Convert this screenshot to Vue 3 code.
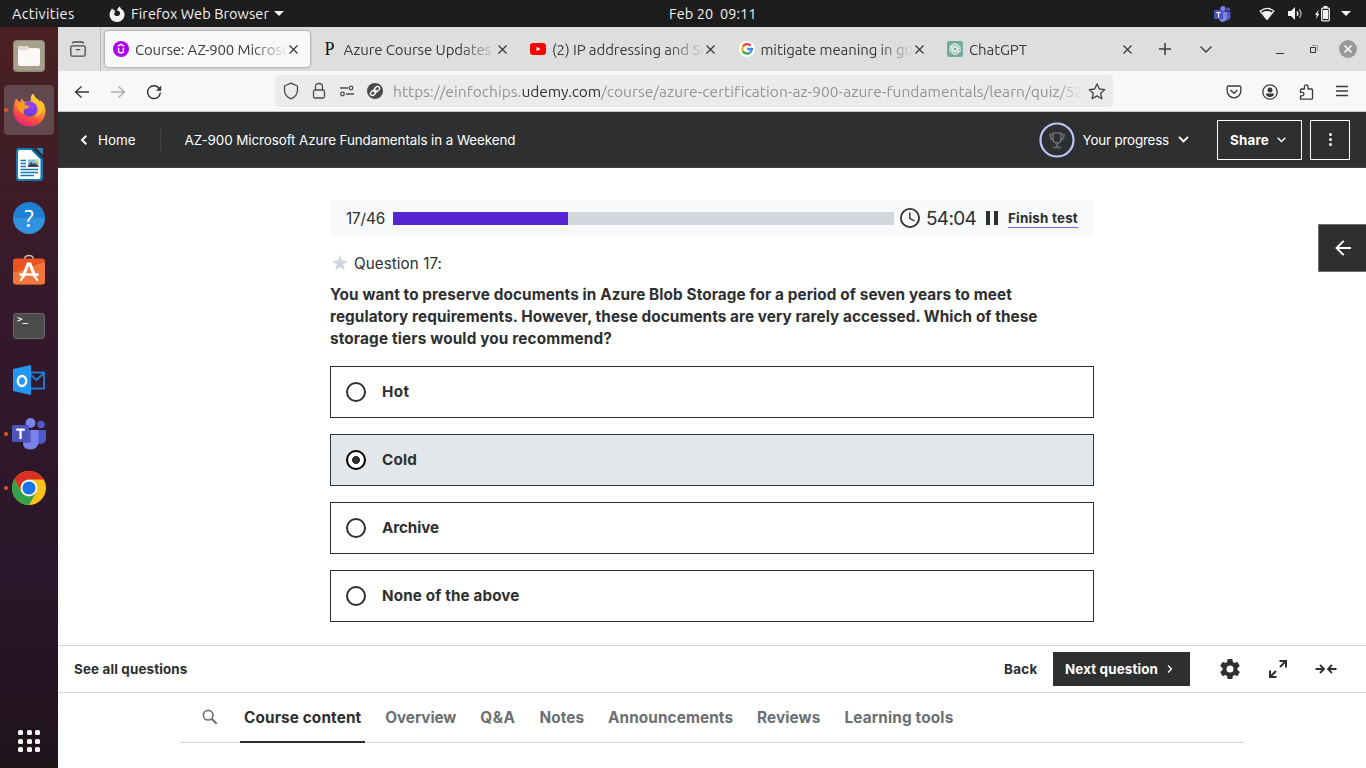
<script setup>
const vFit = {
  mounted(el, { value }) {
    const natural = el.getBoundingClientRect().width
    const count = el.textContent.length
    el.style.letterSpacing = ((value - natural) / count).toFixed(4) + 'px'
  },
}

const tabs = [
  { icon: 'udemy', title: 'Course: AZ-900', rest: ' Microsoft', width: 99, active: true },
  { icon: 'p', title: 'Azure Course Updates', rest: '', width: 147.5 },
  { icon: 'youtube', title: '(2) IP addressing and', rest: ' Subnet', width: 137 },
  { icon: 'google', title: 'mitigate meaning in', rest: ' gujarati', width: 132 },
  { icon: 'gpt', title: 'ChatGPT', rest: '', width: 58 },
]

const questionLines = [
  { text: 'You want to preserve documents in Azure Blob Storage for a period of seven years to meet', width: 682 },
  { text: 'regulatory requirements. However, these documents are very rarely accessed. Which of these', width: 707.5 },
  { text: 'storage tiers would you recommend?', width: 282 },
]

const options = [
  { text: 'Hot', width: 27.5 },
  { text: 'Cold', width: 35 },
  { text: 'Archive', width: 57 },
  { text: 'None of the above', width: 137.5 },
]
const selected = 'Cold'

const sections = [
  { text: 'Course content', width: 117.3, active: true },
  { text: 'Overview', width: 71 },
  { text: 'Q&A', width: 35.3 },
  { text: 'Notes', width: 44.5 },
  { text: 'Announcements', width: 125 },
  { text: 'Reviews', width: 63.3 },
  { text: 'Learning tools', width: 109 },
]

const progress = { done: 175, total: 501 }
</script>

<template>
  <div class="desktop">
    <header class="topbar">
      <span class="activities"><span v-fit="62.5">Activities</span></span>
      <svg class="fx-mini" width="16" height="16" viewBox="0 0 16 16">
        <path fill="#f2f2f2" d="M3 2.2 4.2 3.8 6.2 4.2 5.2 5.6 6.6 6.4 5 7.4C5.4 9.8 8 10.8 9.8 9.6 11.6 8.4 11.4 5.8 9.8 5L8 4.6C8.4 2.6 9.4 1 11 .4c.1 1.4 1 2 2.200 3.200C15.600 6 16.200 9 14.800 11.800 13.400 14.600 10.800 16 8 16 3.800 16 .6 12.900.6 8.800.6 7 1.200 5.600 1.900 4.600Z" />
      </svg>
      <span class="app-name"><span v-fit="138">Firefox Web Browser</span></span>
      <svg width="10" height="5" viewBox="0 0 10 5"><path fill="#f2f2f2" d="M0 0h10L5 5z" /></svg>
      <span class="clock"><span v-fit="87.5">Feb 20&nbsp; 09:11</span></span>
      <span class="tray">
        <svg width="17" height="16" viewBox="0 0 17 16">
          <circle cx="9" cy="2.600" r="2.600" fill="#7b83eb" /><circle cx="14.200" cy="3.400" r="1.900" fill="#5059c9" />
          <path fill="#5059c9" d="M10 6h6.500v5a3.500 3.500 0 0 1-5 3z" /><path fill="#7b83eb" d="M5 5.500h8v6a4.200 4.200 0 0 1-8 2z" />
          <rect x="0" y="4" width="9" height="9" rx=".8" fill="#4b53bc" /><path fill="#fff" d="M2.300 5.900h4.400v1.200H5.100v4.300H3.900V7.100H2.300z" />
        </svg>
        <svg class="wifi" width="16" height="13" viewBox="0 0 16 13">
          <path fill="#f2f2f2" d="M3 5.500Q8 2.600 13 5.500L8 12.500z" /><path fill="none" stroke="#f2f2f2" stroke-width="1.300" d="M1.200 4.200Q8-1.600 14.800 4.200M.8 3.600 8 12.500 15.200 3.600" />
        </svg>
        <svg class="sound" width="15" height="13" viewBox="0 0 15 13">
          <path fill="#f2f2f2" d="M0 4h3l4-4v13L3 9H0z" /><path fill="none" stroke="#f2f2f2" stroke-width="1.400" d="M9 4.300q1.600 2.200 0 4.400" /><path fill="none" stroke="#a8a8a8" stroke-width="1.400" d="M11.300 2.300q3.400 4.200 0 8.400" />
        </svg>
        <svg class="battery" width="15" height="16" viewBox="0 0 15 16">
          <path fill="#f2f2f2" d="M3.700 3.500 0 9h1.800L1 13l3.300-5.300H2.600zM8.500 0h4v2h-4zM8 4h5v9H8z" /><rect x="6.700" y="2.200" width="7.600" height="12.600" rx="1" fill="none" stroke="#f2f2f2" stroke-width="1.300" />
        </svg>
        <svg width="10" height="5" viewBox="0 0 10 5"><path fill="#f2f2f2" d="M0 0h10L5 5z" /></svg>
      </span>
    </header>

    <div class="below">
      <nav class="dock">
        <div class="app">
          <svg width="32" height="32" viewBox="0 0 32 32">
            <rect width="32" height="32" rx="4" fill="#8f8875" /><rect x="1" y="1" width="30" height="29.500" rx="3.500" fill="#a8a08d" />
            <path fill="#e2dad2" d="M5 9V7.500Q5 6 6.500 6H14q1 0 1.500 1L17 8.500h8v4H5z" /><path fill="#faf9f8" d="M5.500 10H14l2-1.700h9.500q1.500 0 1.500 1.500V24q0 2-2 2H7q-2 0-2-2V11z" />
          </svg>
        </div>
        <div class="app current running">
          <svg width="33" height="34" viewBox="0 0 33 34">
            <defs>
              <linearGradient id="flame" x1=".8" y1="0" x2=".3" y2="1"><stop offset="0" stop-color="#fff044" /><stop offset=".35" stop-color="#ffb02c" /><stop offset=".65" stop-color="#ff5a35" /><stop offset="1" stop-color="#e8207f" /></linearGradient>
              <radialGradient id="globe" cx=".6" cy=".25" r=".8"><stop offset="0" stop-color="#a040ff" /><stop offset="1" stop-color="#5b3fd0" /></radialGradient>
            </defs>
            <path fill="url(#flame)" d="M3.200 5.500 5.700 8.700 8 8.400 8.300 5.500 11.200 8.800 16.500 8.800 18 7C17.300 4 18.500 1.400 20.500.5 21 4 24 5.300 26.300 8.500L27.500 7.500C31 10 32.500 13.500 32.500 18 32.500 27 25.500 33.500 16.500 33.500 7.500 33.500.5 27 .5 18 .5 13 1.500 8.500 3.200 5.500Z" />
            <circle cx="16.700" cy="16" r="7.600" fill="url(#globe)" />
            <path fill="#ff9a21" d="M3.500 12q4-3 8.500-.5l4.200 1.700q-.7 2.600-4.200 2.700-2.600 1.200-.5 4.600-5.500.5-8-8.500z" />
            <path fill="#ffc42f" d="M18 7q6 1 7.600 6.500 1.600 6.500-4 10.500 9-2 7.500-11-1-5-5.500-7.500z" />
          </svg>
        </div>
        <div class="app">
          <svg width="27" height="33" viewBox="0 0 27 33">
            <path fill="#1479ad" d="M3 0h14l10 10v20q0 3-3 3H3q-3 0-3-3V3q0-3 3-3z" /><path fill="#2387bb" d="M20 0h7v7z" /><path fill="#0d4e74" d="m17 0 10 10-1 1L16 1z" />
            <path fill="#fff" d="M3.500 2H15l9.500 9.500V29q0 2-2 2h-19q-1.500 0-1.500-2V3.500Q2 2 3.500 2z" />
            <path stroke="#1479ad" stroke-width="1.400" d="M4.500 12.500H10M4.500 15.500H10M4.500 18.500H10M4.500 21.500H22M4.500 24.500H22M4.500 27.500H18" /><rect x="12" y="11.500" width="10.500" height="7.500" fill="#82bfe2" /><path fill="#41474d" d="m12 18 3-4 2 2 2-1 3.500 3v1H12z" /><circle cx="20.500" cy="13" r="1.300" fill="#ffd431" />
          </svg>
        </div>
        <div class="app help"><span>?</span></div>
        <div class="app">
          <svg class="store" width="32" height="32" viewBox="0 0 32 32">
            <path fill="none" stroke="#c9bda5" stroke-width="1.500" d="M11.500 6q0-4.500 4.500-4.500T20.500 6" /><rect y="4.500" width="32" height="26" rx="3" fill="#e95420" /><path fill="#f4884f" d="M0 19 32 8v19.500q0 3-3 3H3q-3 0-3-3z" opacity=".65" />
            <path fill="none" stroke="#fff" stroke-width="3.200" d="M9.500 24 15 10h2l5.500 14" /><path stroke="#fff" stroke-width="2.500" stroke-linecap="round" d="M7.500 20.500h17" /><path stroke="#fff" stroke-width="2.200" stroke-linecap="round" d="m8.800 24.500-1 1.500M23.300 24.500l1 1.500" />
          </svg>
        </div>
        <div class="app">
          <div class="terminal"><span>&gt;_</span></div>
        </div>
        <div class="app">
          <svg width="32" height="31" viewBox="0 0 32 31">
            <rect x="15.500" y="7.500" width="15.500" height="16" fill="none" stroke="#1b80db" stroke-width="1.800" /><path fill="none" stroke="#1b80db" stroke-width="1.800" d="m17 9 6.500 6L31 8" /><path fill="#2196f3" d="M0 4 18 0v30L0 26z" /><ellipse cx="9" cy="16" rx="4.200" ry="5" fill="none" stroke="#fff" stroke-width="2.400" />
          </svg>
        </div>
        <div class="app running">
          <svg width="34" height="32" viewBox="0 0 34 32">
            <circle cx="29" cy="6.500" r="3.800" fill="#5059c9" /><circle cx="18.500" cy="5" r="5" fill="#7b83eb" /><path fill="#5059c9" d="M24 12h10v8q0 6-6 6h-4z" /><path fill="#7b83eb" d="M11 12h15.500v11q0 8.500-8 8.500T11 24z" /><path fill="#5961c6" d="M11 12h8v11q0 2-2 2h-6z" />
            <rect y="7" width="17" height="17" rx="1.500" fill="#4b53bc" /><path fill="#fff" d="M4.300 10.500h8.500v2.200H9.700V21H7.400v-8.300H4.300z" />
          </svg>
        </div>
        <div class="app running">
          <svg width="34" height="34" viewBox="0 0 34 34">
            <circle cx="17" cy="17" r="17" fill="#fbc116" /><path fill="#d93025" d="M2.280 8.500A17 17 0 0 1 31.720 8.500H17a8.500 8.500 0 0 0-7.360 12.750z" /><path fill="#34a24c" d="M2.280 8.500A17 17 0 0 0 17 34l7.360-12.750A8.500 8.500 0 0 1 9.640 21.250z" /><circle cx="17" cy="17" r="8.300" fill="#fff" /><circle cx="17" cy="17" r="6.600" fill="#1a73e8" />
          </svg>
        </div>
        <div class="all-apps"><i v-for="n in 9" :key="n"></i></div>
      </nav>

      <main class="browser">
        <div class="tabstrip">
          <div class="view">
            <svg width="16" height="16" viewBox="0 0 16 16" fill="none" stroke="#4a4a4a" stroke-width="1.300" stroke-linecap="round"><path d="M2.500 2q.5-1 1.700-1h7.600q1.200 0 1.700 1" /><rect x=".8" y="4.800" width="14.400" height="10.400" rx="1.600" /><path d="M6.300 8.700h3.400" /></svg>
          </div>
          <div v-for="tab in tabs" :key="tab.title" class="tab" :class="{ active: tab.active }">
            <svg class="favicon" width="16" height="16" viewBox="0 0 16 16">
              <template v-if="tab.icon === 'udemy'">
                <circle cx="8" cy="8" r="8" fill="#b000f0" /><path fill="none" stroke="#fff" stroke-width="1.500" d="M4.800 5.200 8 3.400l3.200 1.800M5.600 6.800v3q0 2.300 2.400 2.300t2.400-2.300v-3" />
              </template>
              <text v-else-if="tab.icon === 'p'" class="letter" x="2.500" y="14">P</text>
              <template v-else-if="tab.icon === 'youtube'">
                <rect y="2" width="16" height="12" rx="3" fill="#f00" /><path fill="#fff" d="m6.500 5.700 4 2.300-4 2.300z" />
              </template>
              <template v-else-if="tab.icon === 'google'">
                <circle cx="8" cy="8" r="8" fill="#fff" /><g fill="none" stroke-width="2.300"><path stroke="#ea4335" d="M4 5.500a4.800 4.800 0 0 1 7.600-.8" /><path stroke="#fbbc05" d="M4.100 5.300a5 5 0 0 0 0 5.400" /><path stroke="#34a853" d="M4 10.500a4.800 4.800 0 0 0 7.300.9" /><path stroke="#4285f4" d="M11.200 11.400A4.800 4.800 0 0 0 12.900 8H8.200" /></g>
              </template>
              <template v-else>
                <rect width="16" height="16" rx="2" fill="#74aa9c" /><g fill="none" stroke="#fff" stroke-width=".8"><path v-for="a in 6" :key="a" :transform="`rotate(${a * 60} 8 8)`" d="M6 5.200 8.500 3.700q3-1.200 4.300 1.600.5 1.500-.3 2.700M8 5.700 10 6.800v4" /></g>
              </template>
            </svg>
            <span class="title"><span v-fit="tab.width">{{ tab.title }}</span>{{ tab.rest }}</span>
            <svg class="close" width="9" height="9" viewBox="0 0 9 9"><path stroke="#333" stroke-width="1.100" d="m.5.500 8 8m0-8-8 8" /></svg>
          </div>
          <div class="window-tools">
            <svg width="12" height="12" viewBox="0 0 12 12"><path stroke="#3a3a3a" stroke-width="1.500" d="M6 0v12M0 6h12" /></svg>
            <svg class="list" width="12" height="7" viewBox="0 0 12 7"><path fill="none" stroke="#3a3a3a" stroke-width="1.400" d="m.5.500 5.500 5.500L11.500.5" /></svg>
            <svg class="min" width="8" height="6" viewBox="0 0 8 6"><path fill="#333" d="M0 5h8v1H0z" /></svg>
            <svg class="restore" width="8" height="8" viewBox="0 0 8 8" fill="none"><path stroke="#999" d="M2 .5h5.500V6" /><path stroke="#333" stroke-width="1" d="M.5 2.500h5v5h-5z" /></svg>
            <svg class="quit" width="18" height="18" viewBox="0 0 18 18"><circle cx="9" cy="9" r="9" fill="#999" /><path stroke="#fff" stroke-width="1.500" d="m5.500 5.500 7 7m0-7-7 7" /></svg>
          </div>
        </div>

        <div class="toolbar">
          <div class="nav-buttons">
            <svg width="16" height="16" viewBox="0 0 16 16" fill="none" stroke="#333" stroke-width="1.300"><path d="M15 8H1.500m6-5.500L1.500 8l6 5.500" /></svg>
            <svg width="16" height="16" viewBox="0 0 16 16" fill="none" stroke="#aaa" stroke-width="1.300"><path d="M1 8h13.500m-6-5.500 6 5.500-6 5.500" /></svg>
            <svg width="16" height="16" viewBox="0 0 16 16"><path fill="none" stroke="#333" stroke-width="1.400" d="M13.600 5A6.400 6.400 0 1 0 14.400 8.500" /><path fill="#333" d="M15.200 1.500v5.200H10z" /></svg>
          </div>
          <div class="urlbar">
            <svg width="16" height="18" viewBox="0 0 16 18"><path fill="none" stroke="#4b4b4b" stroke-width="1.300" stroke-linejoin="round" d="M8 1.200 14.500 4v4q0 6-6.500 8.800Q1.500 14 1.500 8V4z" /></svg>
            <svg width="16" height="18" viewBox="0 0 16 18" fill="none" stroke="#4b4b4b" stroke-width="1.300"><rect x="2.500" y="8" width="11" height="8" rx="1.500" /><path d="M4.500 8V4.500q0-3 3.500-3t3.500 3V8" /></svg>
            <svg width="16" height="16" viewBox="0 0 16 16" fill="none" stroke="#4b4b4b" stroke-width="1.300"><path d="M1 5h8M7 11h8" /><circle cx="12" cy="5" r="1.800" /><circle cx="3.500" cy="11" r="1.800" /></svg>
            <svg width="16" height="16" viewBox="0 0 16 16"><circle cx="8" cy="8" r="8" fill="#4b4b4b" /><g fill="none" stroke="#fff" stroke-width="1.300" transform="rotate(-45 8 8)"><rect x="2.400" y="6" width="5.600" height="4" rx="2" /><rect x="8" y="6" width="5.600" height="4" rx="2" /><path d="M6 8h4" /></g></svg>
            <span class="address"><span v-fit="128.5">https://einfochips.</span><b v-fit="79.5">udemy.com</b><span v-fit="464">/course/azure-certification-az-900-azure-fundamentals/learn/quiz/</span>52</span>
            <svg width="18" height="17" viewBox="0 0 18 17"><path fill="none" stroke="#444" stroke-width="1.300" stroke-linejoin="round" d="m9 1 2.300 5 5.500.6-4.100 3.700 1.200 5.400L9 12.900l-4.900 2.800 1.200-5.400-4.100-3.700 5.500-.6z" /></svg>
          </div>
          <div class="extras">
            <svg width="16" height="16" viewBox="0 0 16 16" fill="none" stroke="#3a3a3a" stroke-width="1.300"><path d="M2.500 2h11q1.300 0 1.300 1.300v3.700a6.800 6.800 0 0 1-13.600 0V3.300Q1.200 2 2.500 2z" /><path d="m4.500 6 3.500 3.300L11.500 6" /></svg>
            <svg width="16" height="16" viewBox="0 0 16 16"><circle cx="8" cy="8" r="7.200" fill="none" stroke="#3a3a3a" stroke-width="1.300" /><circle cx="8" cy="6" r="2.500" fill="#3a3a3a" /><path fill="#3a3a3a" d="M3.800 9.500h8.400q-.5 3.500-4.200 3.500t-4.200-3.500z" /></svg>
            <svg width="16" height="16" viewBox="0 0 16 16"><path fill="none" stroke="#3a3a3a" stroke-width="1.300" stroke-linejoin="round" d="M2.500 15.200h11q1 0 1-1V6q0-1-1-1H10V3Q10 .8 8.200.8T6.400 3v2H3.500q-1 0-1 1v2.400h1.700q1.800 0 1.800 1.700t-1.800 1.700H2.500z" /></svg>
            <svg class="menu" width="16" height="16" viewBox="0 0 16 16"><path stroke="#3a3a3a" stroke-width="1.300" d="M2 3.500h12M2 8h12M2 12.500h12" /></svg>
          </div>
        </div>

        <div class="page">
          <div class="course-bar">
            <svg width="8" height="10" viewBox="0 0 8 10"><path fill="none" stroke="#fff" stroke-width="1.900" d="M6.300.8 2 5l4.300 4.200" /></svg>
            <span class="home"><span v-fit="37.500">Home</span></span>
            <i class="rule"></i>
            <span class="course-title"><span v-fit="331">AZ-900 Microsoft Azure Fundamentals in a Weekend</span></span>
            <svg class="trophy" width="36" height="36" viewBox="0 0 36 36"><circle cx="18" cy="18" r="16.500" fill="none" stroke="#c0c4fc" stroke-width="2.200" /><g fill="none" stroke="#6a6f73" stroke-width="1.600"><path d="M14 11h8v6q0 4-4 4t-4-4zM14 12.500h-3q0 5.500 4 5.500M22 12.500h3q0 5.500-4 5.500M18 21v4M14 25.500h8" /></g></svg>
            <span class="progress-label"><span v-fit="86.500">Your progress</span></span>
            <svg width="11" height="7" viewBox="0 0 11 7"><path fill="none" stroke="#fff" stroke-width="1.900" d="m1 .8 4.500 4.500L10 .8" /></svg>
            <button class="share"><span v-fit="39">Share</span><svg width="9" height="6" viewBox="0 0 9 6"><path fill="none" stroke="#fff" stroke-width="1.400" d="m.7.700 3.800 3.800L8.300.7" /></svg></button>
            <button class="more"><i></i><i></i><i></i></button>
          </div>

          <button class="sidebar-toggle">
            <svg width="16" height="16" viewBox="0 0 16 16"><path fill="none" stroke="#fff" stroke-width="1.900" d="M16 8H2M8.700.8 1.500 8l7.200 7.200" /></svg>
          </button>

          <section class="quiz">
            <div class="quiz-status">
              <span class="counter"><span v-fit="39">17/46</span></span>
              <div class="track"><div class="fill" :style="{ width: (progress.done / progress.total) * 100 + '%' }"></div></div>
              <svg class="timer" width="20" height="20" viewBox="0 0 20 20" fill="none" stroke="#2d2f31"><circle cx="10" cy="10" r="9.100" stroke-width="1.800" /><path stroke-width="1.400" d="M9.800 4.500v5.800l4.700 2.700" /></svg>
              <span class="time"><span v-fit="50">54:04</span></span>
              <svg class="pause" width="12" height="14" viewBox="0 0 12 14"><path fill="#2d2f31" d="M0 0h4v14H0zM8 0h4v14H8z" /></svg>
              <span class="finish"><span v-fit="70">Finish test</span></span>
            </div>
            <div class="question-number">
              <svg width="16" height="16" viewBox="0 0 16 16"><path fill="#d1d7dc" d="m8 0 2 5.600 6 .2-4.800 3.600 1.800 6L8 12l-5 3.400 1.800-6L0 5.800l6-.2z" /></svg>
              <span v-fit="88">Question 17:</span>
            </div>
            <div class="prompt">
              <div v-for="line in questionLines" :key="line.text"><span v-fit="line.width">{{ line.text }}</span></div>
            </div>
            <div class="options">
              <div v-for="option in options" :key="option.text" class="option" :class="{ selected: option.text === selected }">
                <i class="radio"></i><span v-fit="option.width">{{ option.text }}</span>
              </div>
            </div>
          </section>

          <footer class="quiz-footer">
            <span class="see-all"><span v-fit="113.500">See all questions</span></span>
            <span class="back"><span v-fit="33.500">Back</span></span>
            <button class="next"><span v-fit="93">Next question</span><svg width="6" height="8" viewBox="0 0 6 8"><path fill="none" stroke="#fff" stroke-width="1.300" d="m1 .5 3.500 3.500L1 7.500" /></svg></button>
            <div class="controls">
              <svg width="24" height="24" viewBox="0 0 24 24"><path fill="#2d2f31" d="M19.430 12.980c.040-.320.070-.640.070-.980s-.030-.660-.070-.980l2.110-1.650c.190-.150.240-.420.120-.640l-2-3.460c-.120-.220-.390-.300-.610-.220l-2.490 1c-.520-.400-1.080-.730-1.690-.980l-.380-2.650A.49.490 0 0 0 14 2h-4c-.250 0-.460.180-.490.420l-.380 2.650c-.610.250-1.170.590-1.690.980l-2.490-1c-.230-.090-.490 0-.610.220l-2 3.460c-.130.220-.070.490.120.640l2.110 1.650c-.040.320-.070.650-.070.980s.030.660.070.980l-2.110 1.650c-.190.150-.240.420-.120.640l2 3.460c.120.220.390.300.610.220l2.490-1c.520.400 1.080.730 1.690.980l.380 2.650c.030.240.240.420.490.420h4c.250 0 .460-.180.490-.420l.380-2.650c.610-.250 1.170-.590 1.690-.980l2.490 1c.230.090.490 0 .610-.220l2-3.460c.120-.220.070-.490-.120-.640zM12 15.500a3.500 3.500 0 1 1 0-7 3.500 3.500 0 0 1 0 7z" /></svg>
              <svg width="24" height="24" viewBox="0 0 24 24"><path fill="none" stroke="#2d2f31" stroke-width="2" d="M13.500 4H20v6.500M20 4l-6 6M4 13.500V20h6.500M4 20l6-6" /></svg>
              <svg width="24" height="24" viewBox="0 0 24 24"><path fill="none" stroke="#2d2f31" stroke-width="1.800" d="M1.500 12h8M6 8l4 4-4 4M22.500 12h-8M18 8l-4 4 4 4" /></svg>
            </div>
          </footer>

          <nav class="sections">
            <svg width="16" height="16" viewBox="0 0 16 16" fill="none" stroke="#6a6f73"><circle cx="6.200" cy="6.200" r="4.800" stroke-width="1.600" /><path stroke-width="2" d="m9.700 9.700 5 5" /></svg>
            <span v-for="section in sections" :key="section.text" class="section" :class="{ active: section.active }"><span v-fit="section.width">{{ section.text }}</span></span>
          </nav>
        </div>
      </main>
    </div>
  </div>
</template>

<style>
body { margin: 0; overflow: hidden; }
</style>

<style scoped>
* { box-sizing: border-box; }
svg { flex: none; display: block; }
button { font: inherit; color: inherit; background: none; padding: 0; margin: 0; }
.desktop { width: 1366px; height: 768px; overflow: hidden; display: flex; flex-direction: column; font: 15px/20px "Ubuntu", "Noto Sans", "Open Sans", sans-serif; white-space: nowrap; }

.topbar { height: 27px; flex: none; background: #1d1d1d; color: #f2f2f2; display: flex; align-items: center; padding-left: 12px; font-size: 14.500px; }
.activities { width: 97px; }
.app-name { width: 138px; margin: 0 5px 0 6px; }
.clock { margin-left: 385px; width: 88px; }
.tray { margin-left: 456.500px; display: flex; align-items: center; }
.wifi { margin-left: 28px; }
.sound { margin-left: 13px; }
.battery { margin: 0 11px 0 12px; }

.below { flex: 1; display: flex; min-height: 0; }
.dock { width: 58px; flex: none; padding-top: 2px; background: linear-gradient(#4a2022, #35192b 38%, #29162a 75%, #20131a); display: flex; flex-direction: column; }
.app { height: 54px; flex: none; display: flex; align-items: center; justify-content: center; position: relative; }
.current { height: 50px; margin: 2px 4px; border-radius: 4px; background: #634850; }
.running::before { content: ""; position: absolute; left: 4px; top: 25px; width: 4px; height: 4px; border-radius: 50%; background: #e95420; }
.current.running::before { left: 0; top: 23px; }
.help span { width: 32px; height: 32px; border-radius: 50%; background: linear-gradient(#1f80d2 50%, #3192e0 50%); color: #fff; font-size: 25px; line-height: 32px; text-align: center; }
.store { margin-top: -4px; }
.terminal { width: 32px; height: 26px; border: 1px solid #686868; border-radius: 3px; background: #4b4b4b; color: #fff; font: bold 9px/9px "DejaVu Sans Mono", monospace; padding: 1px 0 0 3px; }
.all-apps { margin: auto 0 16px 18px; display: grid; grid-template-columns: repeat(3, 5px); gap: 3.500px; }
.all-apps i { width: 5px; height: 5px; border-radius: 1.500px; background: #f4f4f4; }

.browser { flex: 1; min-width: 0; display: flex; flex-direction: column; background: #fff; }
.tabstrip { height: 44px; flex: none; background: #dedede; display: flex; color: #3a3a3a; }
.view { width: 43px; margin-right: 2px; border-right: 1px solid #bababa; display: flex; align-items: center; justify-content: center; }
.view svg { margin-right: 2px; }
.tab { width: 208.500px; flex: none; padding-left: 10px; display: flex; align-items: center; position: relative; }
.tab > * { position: relative; }
.tab.active::before { content: ""; position: absolute; left: 2px; top: 4px; width: 205px; height: 36px; border-radius: 4px; background: #f8f8f8; box-shadow: 0 0 3px #777; }
.favicon { overflow: visible; }
.letter { font: 18px "Liberation Serif", "DejaVu Serif", serif; fill: #111; }
.title { margin: 1px 0 0 6px; width: 153px; overflow: hidden; -webkit-mask-image: linear-gradient(90deg, #000 116px, transparent 153px); mask-image: linear-gradient(90deg, #000 116px, transparent 153px); }
.close { margin-left: 1.200px; }
.window-tools { display: flex; align-items: center; margin-left: 13.500px; }
.list { margin-left: 28.500px; }
.min { margin: 3px 0 0 64px; }
.restore { margin-left: 26px; }
.quit { margin-left: 21px; }

.toolbar { height: 41px; flex: none; background: #f8f8f8; border-bottom: 1px solid #c8c8c8; display: flex; align-items: center; padding-left: 16px; }
.nav-buttons { display: flex; gap: 20px; width: 201px; }
.nav-buttons svg, .extras svg { margin-top: 1px; }
.extras .menu { margin-top: 0; }
.urlbar { width: 838px; height: 32px; background: #ebebeb; border-radius: 4px; display: flex; align-items: center; gap: 12px; padding-left: 8px; }
.address { width: 690px; overflow: hidden; margin: 1px -7px 0 -2px; color: #949494; font-size: 15.500px; -webkit-mask-image: linear-gradient(90deg, #000 664px, transparent 690px); mask-image: linear-gradient(90deg, #000 664px, transparent 690px); }
.address b { font-weight: 400; color: #333; }
.extras { display: flex; gap: 20px; margin-left: 113px; }

.page { flex: 1; min-height: 0; position: relative; display: flex; flex-direction: column; color: #2d2f31; font: 13.400px/20px Inter, "Liberation Sans", sans-serif; }
.course-bar { height: 56px; flex: none; background: #2d2f31; border-bottom: 1px solid #3e4143; color: #fff; display: flex; align-items: center; padding-left: 22px; }
.home { margin-left: 10px; width: 62px; }
.rule { width: 1px; height: 22px; background: #3e4143; }
.course-title { margin-left: 23.500px; width: 853.500px; }
.trophy { margin-left: .5px; }
.progress-label { width: 87px; margin: 0 8px; }
.share { width: 85px; height: 40px; border: 1px solid #fff; margin-left: 28.500px; display: flex; align-items: center; padding-left: 12px; gap: 8px; font-weight: 700; }
.more { width: 40px; height: 40px; border: 1px solid #fff; margin-left: 8px; display: flex; flex-direction: column; align-items: center; justify-content: center; gap: 2px; }
.more i { width: 3px; height: 3px; border-radius: 50%; background: #fff; }
.sidebar-toggle { position: absolute; right: 0; top: 112px; width: 48px; height: 48px; background: #2d2f31; border: 1px solid #6a6f73; border-right: 0; display: flex; align-items: center; justify-content: center; }

.quiz { width: 764px; height: 477px; flex: none; margin-left: 272px; padding-top: 32px; }
.quiz-status { height: 36px; background: #f7f9fa; display: flex; align-items: center; padding-left: 16px; }
.counter { width: 47px; font-size: 15.300px; padding-top: 2px; }
.track { width: 501px; height: 13px; background: #d1d7dc; margin-top: 1px; }
.fill { height: 100%; background: #5624d0; }
.timer { margin-left: 6px; }
.time { margin-left: 6px; width: 60px; font-size: 19px; padding-top: 1px; }
.finish { margin-left: 10px; font-weight: 700; line-height: 18px; padding-top: 1px; border-bottom: 1px solid #7a64d8; }
.question-number { height: 20px; margin-top: 18px; padding-left: 2px; display: flex; align-items: center; gap: 6px; font-size: 15.200px; }
.question-number svg { margin-top: -2px; }
.prompt { margin-top: 10px; font: 700 15.300px/22px Inter, "Liberation Sans", sans-serif; }
.options { margin-top: 16px; display: flex; flex-direction: column; gap: 16px; }
.option { height: 52px; border: 1px solid #2d2f31; display: flex; align-items: center; padding-left: 15px; gap: 16px; font-size: 15.200px; font-weight: 700; }
.radio { width: 20px; height: 20px; border: 2px solid #2d2f31; border-radius: 50%; background: #fff; }
.selected { background: #e3e7ea; }
.selected .radio { border-color: #000; background: radial-gradient(circle, #2d2f31 3.700px, #fff 4.300px); }

.quiz-footer { height: 48px; flex: none; border-top: 1px solid #d1d7dc; border-bottom: 1px solid #d1d7dc; display: flex; align-items: center; padding-left: 16px; font-weight: 700; }
.see-all { width: 930px; }
.back { width: 49px; }
.next { width: 137px; height: 34px; border: 0; background: #2d2f31; color: #fff; display: flex; align-items: center; justify-content: flex-start; gap: 9px; padding-left: 12px; }
.controls { margin-left: 28px; display: flex; gap: 24px; }
.sections { width: 1064px; height: 50px; flex: none; margin-left: 122px; border-bottom: 1px solid #d1d7dc; padding-left: 22px; display: flex; gap: 24px; font-size: 15.300px; font-weight: 700; color: #6a6f73; }
.sections svg { margin: 16px 2px 0 0; }
.section { height: 50px; line-height: 49px; }
.section.active { margin: 0 -4px; padding: 0 4px; color: #2d2f31; border-bottom: 2px solid #2d2f31; }
</style>
